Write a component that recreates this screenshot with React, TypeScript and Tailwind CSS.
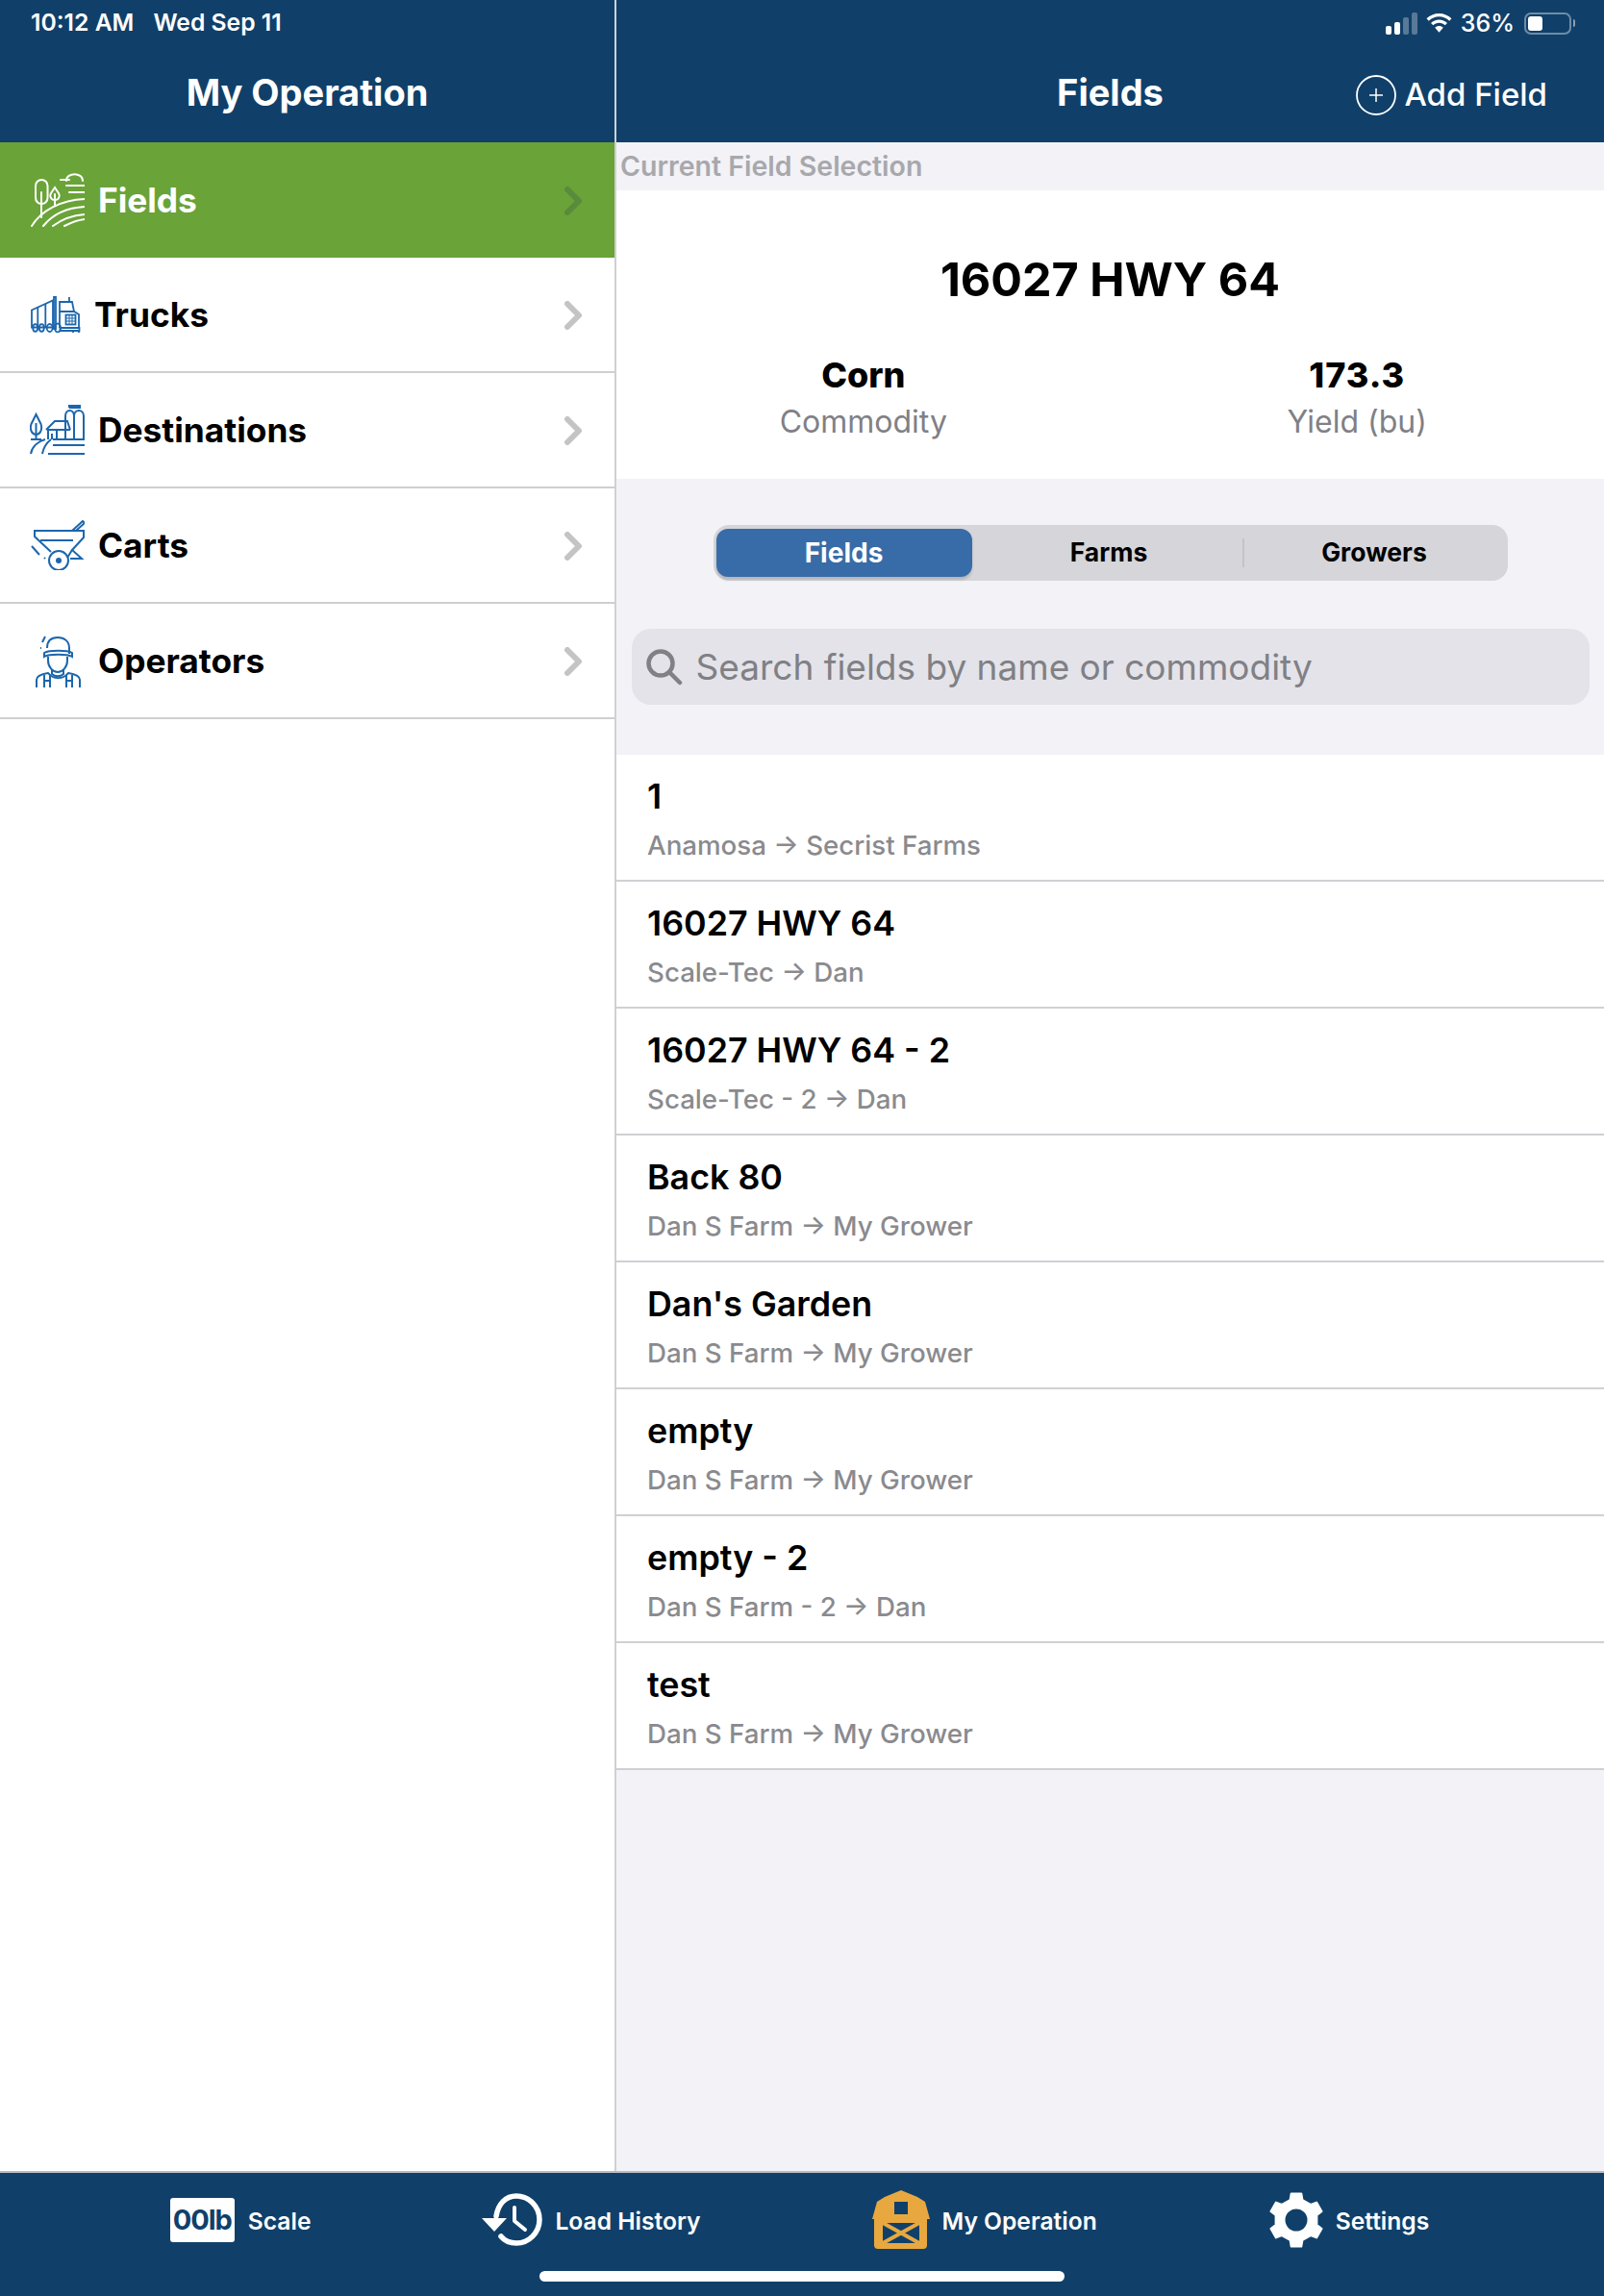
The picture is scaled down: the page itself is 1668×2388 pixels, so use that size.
const BLUE = "#1c66ad";

const FieldsIcon = () => (
  <svg width="56" height="56" viewBox="0 0 56 56" fill="none" stroke="white" strokeWidth="2" strokeLinecap="round">
    <rect x="5" y="7" width="12.500" height="25" rx="6.200" />
    <path d="M11 20v26" />
    <path d="M25 15l4 6c2 3 0 7-4 7s-6-4-4-7z" />
    <path d="M25 22v12" />
    <path d="M37 8c0-9 17-9 17 0M31 7h9M37 13h19" />
    <path d="M40 20h16" />
    <path d="M1 55c10-16 30-27 55-28" />
    <path d="M13 55c9-11 24-19 43-20" />
    <path d="M23 55c8-6 20-11 33-12" />
    <path d="M35 55c6-3 13-6 21-7" />
  </svg>
);

const TruckIcon = () => (
  <svg width="54" height="38" viewBox="0 0 54 38" fill="none" stroke={BLUE} strokeWidth="1.800">
    <path d="M2 14.500L24 4.500V32.500H2z" />
    <path d="M8.300 12v20M16.300 8v24" />
    <path d="M25 1v33h2V1z" />
    <path d="M31 6h13l2 10h-15zM41 1v5M31 16v17" />
    <path d="M31 16h15l5 3v14" />
    <rect x="37.500" y="19.500" width="10" height="10" />
    <path d="M37.500 23h10M37.500 26h10M41 19.500v10M44 19.500v10" strokeWidth="1" />
    <path d="M31.500 33h20v3h-20z" />
    <ellipse cx="5.700" cy="33" rx="2.500" ry="3.800" />
    <ellipse cx="12.300" cy="33" rx="2.500" ry="3.800" />
    <ellipse cx="20.700" cy="33" rx="3" ry="4" />
    <ellipse cx="29" cy="33" rx="3" ry="4.500" />
    <path d="M45 36v2M51 36v2" />
  </svg>
);

const DestinationIcon = () => (
  <svg width="57" height="52" viewBox="0 0 57 52" fill="none" stroke={BLUE} strokeWidth="2">
    <path d="M6.500 10l5 10c2 6-1 11-5 11s-7-5-5-11z" />
    <path d="M6.500 19v17M1 36h11" />
    <path d="M17 26L26 17h13l3 9M19 26v10M28 26v10M23 30v6M18 26h24" />
    <path d="M37 36V12c0-8 9-8 9 0v24M46 36V12c0-8 10-8 10 0v24" />
    <path d="M41 3V1h11v2H41" />
    <path d="M24 36h33M24 42h33M19 51h38" />
    <path d="M1 51c1-7 7-13 15-15" />
    <path d="M13 51c1-6 4-11 9-15" />
  </svg>
);

const CartIcon = () => (
  <svg width="56" height="52" viewBox="0 0 56 52" fill="none" stroke={BLUE} strokeWidth="2">
    <path d="M3 11h52v7L43 31l10 9H41" />
    <path d="M4 11v6l17 16" />
    <path d="M10 21h34" />
    <path d="M43 11l11-10 2 2-9 8" />
    <path d="M1 27l8 9M14 39l1 1" />
    <circle cx="29" cy="42" r="10" />
    <circle cx="29" cy="42" r="3" fill={BLUE} stroke="none" />
    <path d="M38 39l5-8" />
  </svg>
);

const OperatorIcon = () => (
  <svg width="47" height="55" viewBox="0 0 47 55" fill="none" stroke={BLUE} strokeWidth="2">
    <path d="M12 14c0-7 4-11 11-11s12 4 12 11v6" />
    <path d="M9 19c5-3 24-3 29 0v4c-5-3-24-3-29 0z" />
    <path d="M13 23v4c0 7 5 12 10 12s10-5 10-12v-4" />
    <path d="M17 37v4c3 3 9 3 12 0v-4" />
    <path d="M1 55V47c0-4 6-6 12-7l3 3c4 3 11 3 15 0l3-3c6 1 12 3 12 7v8" />
    <path d="M9 42v13M15 48h-6M15 42v13M32 42v13M38 42v13M32 48h6" />
    <path d="M7 8l3-6M5 14h1" />
  </svg>
);

const HistoryIcon = () => (
  <svg width="63" height="55" viewBox="0 0 63 55" fill="none">
    <path d="M15 24C17 11 25 3 36 3c13 0 24 11 24 24.500S49 52 36 52c-6 0-12-2-16-7" stroke="white" strokeWidth="5.500" strokeLinecap="round" />
    <path d="M0 26h26L13 40z" fill="white" />
    <path d="M34 15v14l11 9" stroke="white" strokeWidth="4" strokeLinecap="round" strokeLinejoin="round" />
  </svg>
);

const BarnIcon = () => (
  <svg width="60" height="61" viewBox="0 0 60 61">
    <path d="M30 0l17 7 8 5 5 18h-3v27a4 4 0 0 1-4 4H6a4 4 0 0 1-4-4V30H0L5 12l8-5z" fill="#e8a83f" />
    <rect x="23" y="12" width="14" height="13" fill="#10406a" />
    <rect x="11" y="34" width="38" height="21" fill="#10406a" />
    <path d="M11 34l38 21M49 34L11 55" stroke="#e8a83f" strokeWidth="4" />
  </svg>
);

// six tooth gear, worked out from the tooth angles
const gearPoints = () => {
  const pts: string[] = [];
  for (let i = 0; i < 6; i++) {
    const a = -90 + i * 60;
    const at = (deg: number, r: number) => {
      const rad = ((a + deg) * Math.PI) / 180;
      return (29 + r * Math.cos(rad)).toFixed(1) + " " + (30 + r * Math.sin(rad)).toFixed(1);
    };
    pts.push(at(-17, 22), at(-11, 28), at(11, 28), at(17, 22));
  }
  return "M" + pts.join("L") + "Z";
};

const GearIcon = () => (
  <svg width="58" height="60" viewBox="0 0 58 60">
    <path
      d={gearPoints() + "M29 19a11 11 0 1 0 0 22a11 11 0 1 0 0-22z"}
      fill="white"
      stroke="white"
      strokeWidth="2"
      strokeLinejoin="round"
      fillRule="evenodd"
    />
    <circle cx="29" cy="30" r="11.500" fill="#10406a" />
  </svg>
);

const StatusIcons = () => (
  <div className="flex items-center">
    <div className="flex items-end gap-[3px] h-[23px]">
      <div className="w-[6px] h-[9px] rounded-[2px] bg-white" />
      <div className="w-[6px] h-[13px] rounded-[2px] bg-white" />
      <div className="w-[6px] h-[18px] rounded-[2px] bg-white/30" />
      <div className="w-[6px] h-[23px] rounded-[2px] bg-white/30" />
    </div>
    <svg className="ml-[9px]" width="27" height="20" viewBox="0 0 27 20" fill="white">
      <path d="M13.500 0C8.500 0 4 2 .5 5.300L2.800 7.700C5.700 5 9.400 3.300 13.500 3.300s7.800 1.700 10.700 4.400l2.300-2.400C23 2 18.500 0 13.500 0z" />
      <path d="M13.500 6.500c-3.300 0-6.300 1.300-8.500 3.400l2.300 2.400c1.600-1.500 3.800-2.500 6.200-2.500s4.600 1 6.200 2.500L22 9.900c-2.200-2.100-5.200-3.400-8.500-3.400z" />
      <path d="M13.500 13c-1.700 0-3.200.7-4.300 1.700l4.300 5 4.300-5c-1.100-1-2.600-1.700-4.300-1.700z" />
    </svg>
    <span className="ml-[9px] text-[25px] font-medium text-white leading-none">36%</span>
    <div className="ml-[10px] flex items-center">
      <div className="w-[49px] h-[23px] rounded-[7px] border-2 border-white/40 p-[2px]">
        <div className="w-[15px] h-full rounded-[3px] bg-white" />
      </div>
      <div className="ml-[2px] w-[2px] h-[8px] rounded-r bg-white/50" />
    </div>
  </div>
);

const navItems = [
  { name: "Fields", icon: <FieldsIcon />, row: "pl-[32px] gap-[14px] bg-[#6aa338] text-white", chevron: "#5a8a3c" },
  { name: "Trucks", icon: <TruckIcon />, row: "pl-[31px] gap-[13px] border-b-2 border-[#cfcfd1] text-black", chevron: "#c4c4c6" },
  { name: "Destinations", icon: <DestinationIcon />, row: "pl-[31px] gap-[14px] border-b-2 border-[#cfcfd1] text-black", chevron: "#c4c4c6" },
  { name: "Carts", icon: <CartIcon />, row: "pl-[32px] gap-[14px] border-b-2 border-[#cfcfd1] text-black", chevron: "#c4c4c6" },
  { name: "Operators", icon: <OperatorIcon />, row: "pl-[37px] gap-[18px] border-b-2 border-[#cfcfd1] text-black", chevron: "#c4c4c6" },
];

const fields = [
  { name: "1", farm: "Anamosa", grower: "Secrist Farms" },
  { name: "16027 HWY 64", farm: "Scale-Tec", grower: "Dan" },
  { name: "16027 HWY 64 - 2", farm: "Scale-Tec - 2", grower: "Dan" },
  { name: "Back 80", farm: "Dan S Farm", grower: "My Grower" },
  { name: "Dan's Garden", farm: "Dan S Farm", grower: "My Grower" },
  { name: "empty", farm: "Dan S Farm", grower: "My Grower" },
  { name: "empty - 2", farm: "Dan S Farm - 2", grower: "Dan" },
  { name: "test", farm: "Dan S Farm", grower: "My Grower" },
];

const App = () => {
  return (
    <div className="w-[1668px] h-[2388px] flex flex-col bg-white font-[family-name:Inter,sans-serif]">
      <div className="flex flex-1 min-h-0">
        {/* sidebar */}
        <div className="w-[641px] shrink-0 border-r-2 border-[#d0d0d4] flex flex-col">
          <div className="h-[148px] bg-[#10406a] flex flex-col">
            <div className="h-[48px] pl-[32px] flex items-center gap-[20px] text-[24.700px] font-semibold text-white">
              <span>10:12 AM</span>
              <span>Wed Sep 11</span>
            </div>
            <div className="h-[97px] flex items-center justify-center text-[38px] font-bold text-white">
              My Operation
            </div>
          </div>
          {navItems.map((item) => (
            <div key={item.name} className={"h-[120px] flex items-center " + item.row}>
              {item.icon}
              <span className="mt-[2px] text-[35.300px] font-bold">{item.name}</span>
              <svg className="ml-auto mr-[33px] mt-[2px]" width="20" height="30" viewBox="0 0 20 30" fill="none">
                <path d="M4 3l12 12L4 27" stroke={item.chevron} strokeWidth="6" strokeLinecap="round" strokeLinejoin="round" />
              </svg>
            </div>
          ))}
        </div>

        {/* detail */}
        <div className="flex-1 flex flex-col bg-[#f2f2f7]">
          <div className="h-[148px] bg-[#10406a] flex flex-col">
            <div className="h-[48px] pr-[30px] flex items-center justify-end">
              <StatusIcons />
            </div>
            <div className="relative h-[97px] flex items-center justify-center text-[38px] font-bold text-white">
              Fields
              <div className="absolute right-[59px] top-[26px] flex items-center gap-[8px]">
                <svg width="42" height="42" viewBox="0 0 42 42" fill="none" stroke="white">
                  <circle cx="21" cy="21" r="20" strokeWidth="1.800" />
                  <path d="M21 14v14M14 21h14" strokeWidth="1.500" />
                </svg>
                <span className="text-[33px] font-medium">Add Field</span>
              </div>
            </div>
          </div>

          <div className="h-[50px] pl-[4px] flex items-center text-[28.500px] font-semibold text-[#a8a8ac]">
            Current Field Selection
          </div>

          <div className="h-[300px] bg-white flex flex-col items-center pt-[62px]">
            <div className="text-[48.500px] font-bold text-black leading-[62px]">16027 HWY 64</div>
            <div className="grid grid-cols-2 w-full mt-[44px]">
              <div className="flex flex-col items-center">
                <span className="text-[36px] font-extrabold text-black leading-[48px]">Corn</span>
                <span className="text-[32px] text-[#808085] leading-[50px]">Commodity</span>
              </div>
              <div className="flex flex-col items-center">
                <span className="text-[36px] font-extrabold tracking-[1px] text-black leading-[48px]">173.3</span>
                <span className="text-[32px] text-[#808085] leading-[50px]">Yield (bu)</span>
              </div>
            </div>
          </div>

          <div className="h-[287px] flex flex-col items-center">
            <div className="mt-[48px] w-[826px] h-[58px] rounded-[16px] bg-[#d5d5da] flex items-center p-[3px]">
              <div className="w-[266px] h-[50px] rounded-[12px] bg-[#386ca8] shadow-[0_3px_3px_rgba(0,0,0,0.15)] flex items-center justify-center text-[28px] font-bold text-white">
                Fields
              </div>
              <div className="w-[281px] h-[30px] pl-[4px] flex items-center justify-center text-[26.500px] font-bold text-black">
                Farms
              </div>
              <div className="flex-1 h-[30px] border-l-2 border-[#c4c4c8] flex items-center justify-center text-[26.500px] font-bold text-black">
                Growers
              </div>
            </div>
            <div className="mt-[50px] w-[996px] h-[79px] rounded-[20px] bg-[#e3e3e9] flex items-center pl-[15px] gap-[14px]">
              <svg width="38" height="38" viewBox="0 0 38 38" fill="none" stroke="#808085" strokeWidth="4.500" strokeLinecap="round">
                <circle cx="15" cy="15" r="12.500" />
                <path d="M25 25l10 10" />
              </svg>
              <span className="text-[37px] text-[#808085]">Search fields by name or commodity</span>
            </div>
          </div>

          <div className="flex flex-col">
            {fields.map((field) => (
              <div key={field.name} className="h-[132px] bg-white border-b-2 border-[#d0d0d4] pl-[32px] pt-[18px]">
                <div className="text-[35.800px] font-semibold text-black leading-[50px]">{field.name}</div>
                <div className="text-[27.700px] font-medium text-[#8a8a8e] leading-[44px] mt-[3.500px]">
                  {field.farm} → {field.grower}
                </div>
              </div>
            ))}
          </div>
        </div>
      </div>

      {/* tab bar */}
      <div className="h-[130px] shrink-0 bg-[#10406a] border-t-2 border-[#b8bcc2] flex flex-col items-center">
        <div className="w-full h-[84px] flex items-center justify-center gap-[178px] pt-[13px] pr-[5px] text-white text-[24.600px] font-semibold">
          <div className="flex items-center gap-[14px]">
            <div className="w-[67px] h-[46px] rounded-[3px] bg-white flex items-center justify-center text-[29px] font-bold tracking-[-1px] text-[#10406a]">
              00lb
            </div>
            <span className="mt-[3px]">Scale</span>
          </div>
          <div className="flex items-center gap-[13px]">
            <HistoryIcon />
            <span className="mt-[3px]">Load History</span>
          </div>
          <div className="flex items-center gap-[13px]">
            <BarnIcon />
            <span className="mt-[3px]">My Operation</span>
          </div>
          <div className="flex items-center gap-[12px]">
            <GearIcon />
            <span className="mt-[3px]">Settings</span>
          </div>
        </div>
        <div className="mt-[18px] w-[546px] h-[11px] rounded-full bg-white" />
      </div>
    </div>
  );
};

export default App;
